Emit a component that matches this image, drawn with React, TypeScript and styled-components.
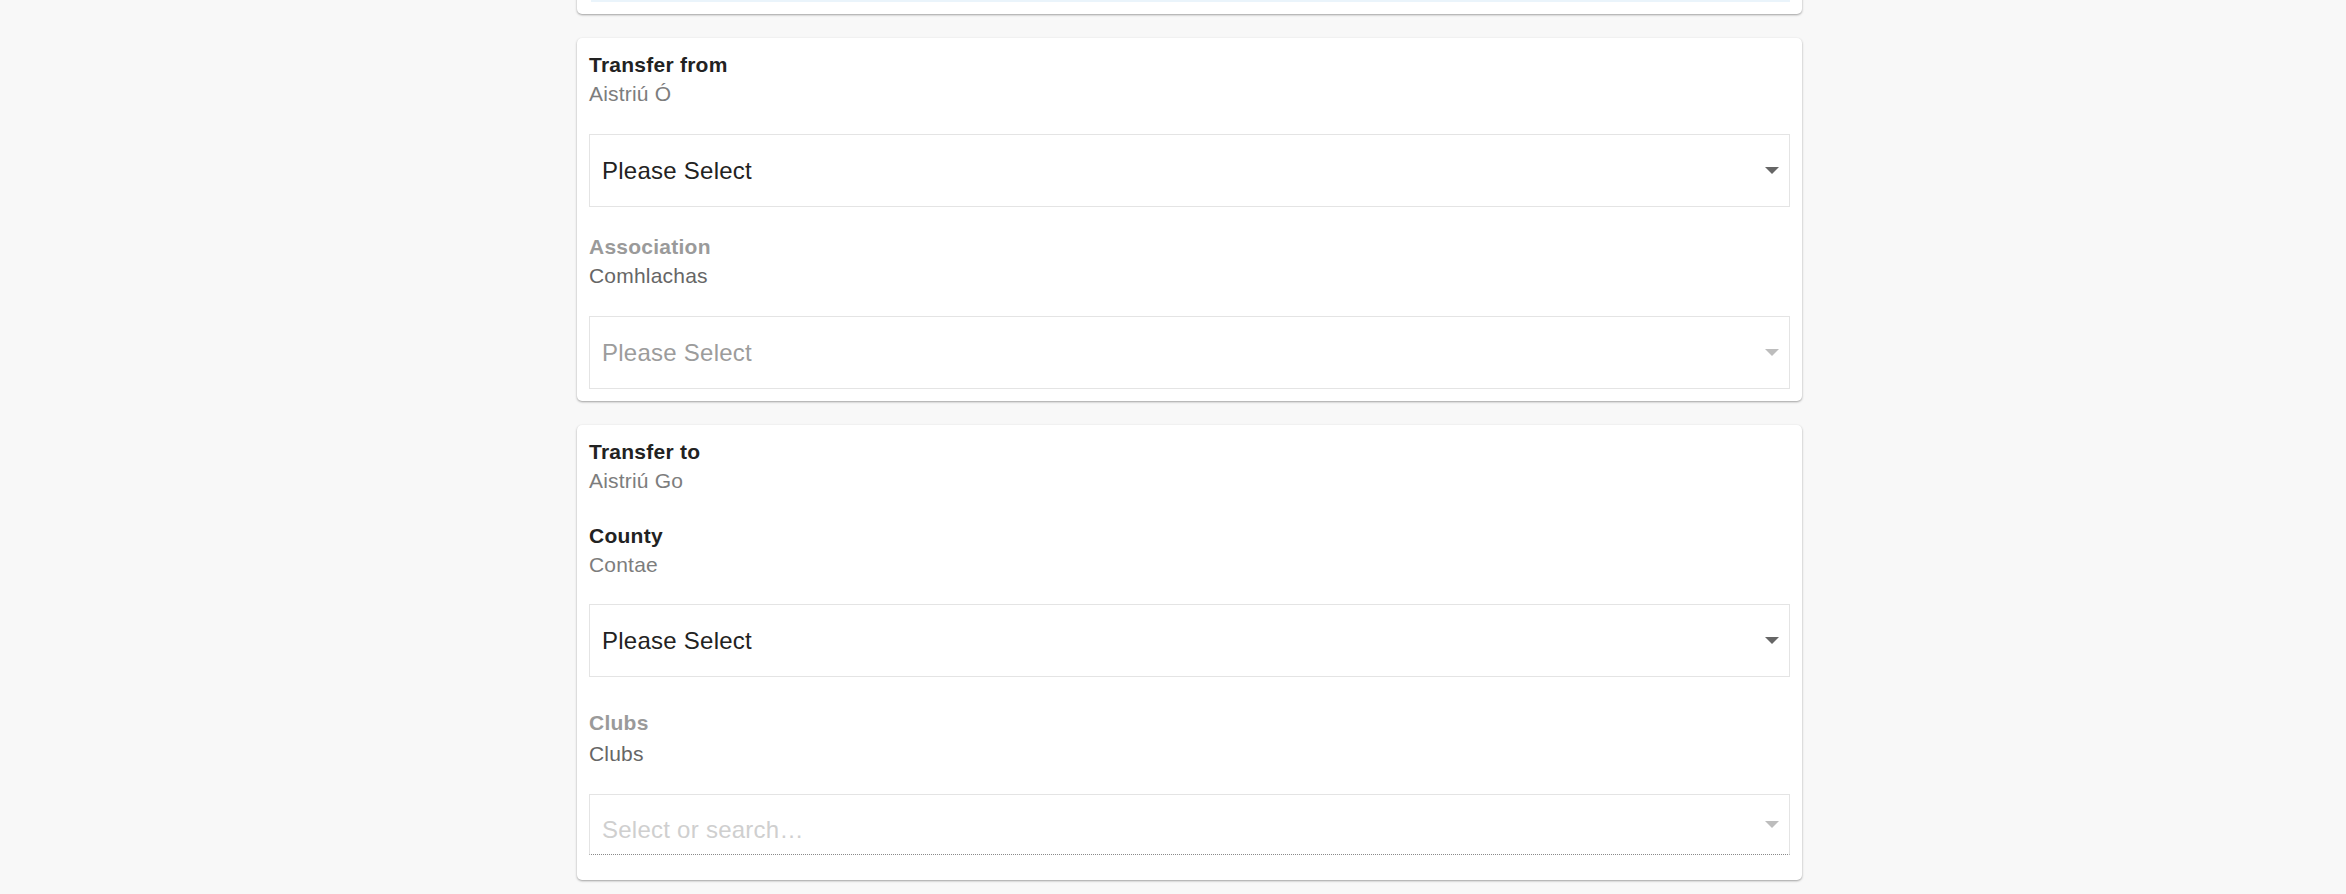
import React from "react";
import styled, { createGlobalStyle } from "styled-components";

const GlobalStyle = createGlobalStyle`
  html, body {
    margin: 0;
    padding: 0;
    background: #f8f8f8;
    font-family: "Liberation Sans", Arial, Helvetica, sans-serif;
  }
  body { overflow: hidden; }
`;

const Page = styled.div`
  display: flex;
  justify-content: center;
  padding-left: 33px;
  height: 894px;
  overflow: hidden;
`;

const Column = styled.div`
  width: 1225px;
  display: flex;
  flex-direction: column;
  gap: 24px;
  margin-top: -70px;
`;

const Card = styled.section<{ $bottom?: number }>`
  background: #ffffff;
  border-radius: 5px;
  box-shadow: 0 1px 3px rgba(0, 0, 0, 0.12), 0 1px 2px rgba(0, 0, 0, 0.26);
  padding: 12px 12px ${(p) => p.$bottom ?? 12}px;
  display: flex;
  flex-direction: column;
`;

const InfoBox = styled.div`
  height: 60px;
  margin-left: 2px;
  background: #eaf4fb;
`;

const Label = styled.div<{ $muted?: boolean; $gap?: number }>`
  font-size: 21px;
  line-height: 29px;
  font-weight: 700;
  letter-spacing: 0.25px;
  color: ${(p) => (p.$muted ? "#9a9a9a" : "#222222")};
  margin-top: ${(p) => p.$gap ?? 0}px;
`;

const Sub = styled.div<{ $dark?: boolean; $gap?: number }>`
  font-size: 21px;
  line-height: 29px;
  letter-spacing: 0.2px;
  color: ${(p) => (p.$dark ? "#666666" : "#7d7d7d")};
  margin-top: ${(p) => p.$gap ?? 0}px;
`;

const SelectBox = styled.div<{ $gap?: number }>`
  margin-top: ${(p) => p.$gap ?? 26}px;
  height: 73px;
  box-sizing: border-box;
  border: 1px solid #e4e4e4;
  background: #ffffff;
  display: flex;
  align-items: center;
  padding: 0 10px 0 12px;
`;

const SearchBox = styled.div`
  margin-top: 26px;
  margin-bottom: 13px;
  height: 61px;
  box-sizing: border-box;
  border: 1px solid #e4e4e4;
  border-bottom: 1px dotted #8a8a8a;
  background: #ffffff;
  display: flex;
  align-items: center;
  padding: 0 10px 0 12px;
`;

const Value = styled.span<{ $tone: "active" | "disabled" | "placeholder"; $top?: number }>`
  flex: 1;
  font-size: 24px;
  letter-spacing: 0.25px;
  padding-top: ${(p) => p.$top ?? 0}px;
  color: ${(p) =>
    p.$tone === "active" ? "#222222" : p.$tone === "disabled" ? "#9c9c9c" : "#cfcfcf"};
`;

const Caret = ({ color }: { color: string }) => (
  <svg width="14" height="7" viewBox="0 0 14 7" aria-hidden="true">
    <polygon points="0,0 14,0 7,7" fill={color} />
  </svg>
);

export default function App() {
  return (
    <>
      <GlobalStyle />
      <Page>
        <Column>
          <Card $bottom={12}>
            <InfoBox />
          </Card>

          <Card>
            <Label>Transfer from</Label>
            <Sub>Aistriú Ó</Sub>
            <SelectBox>
              <Value $tone="active">Please Select</Value>
              <Caret color="#666666" />
            </SelectBox>
            <Label $muted $gap={25}>Association</Label>
            <Sub $dark>Comhlachas</Sub>
            <SelectBox>
              <Value $tone="disabled">Please Select</Value>
              <Caret color="#bdbdbd" />
            </SelectBox>
          </Card>

          <Card>
            <Label>Transfer to</Label>
            <Sub>Aistriú Go</Sub>
            <Label $gap={26}>County</Label>
            <Sub>Contae</Sub>
            <SelectBox $gap={25}>
              <Value $tone="active">Please Select</Value>
              <Caret color="#666666" />
            </SelectBox>
            <Label $muted $gap={31}>Clubs</Label>
            <Sub $dark $gap={2}>Clubs</Sub>
            <SearchBox>
              <Value $tone="placeholder" $top={10}>Select or search…</Value>
              <Caret color="#bdbdbd" />
            </SearchBox>
          </Card>
        </Column>
      </Page>
    </>
  );
}
